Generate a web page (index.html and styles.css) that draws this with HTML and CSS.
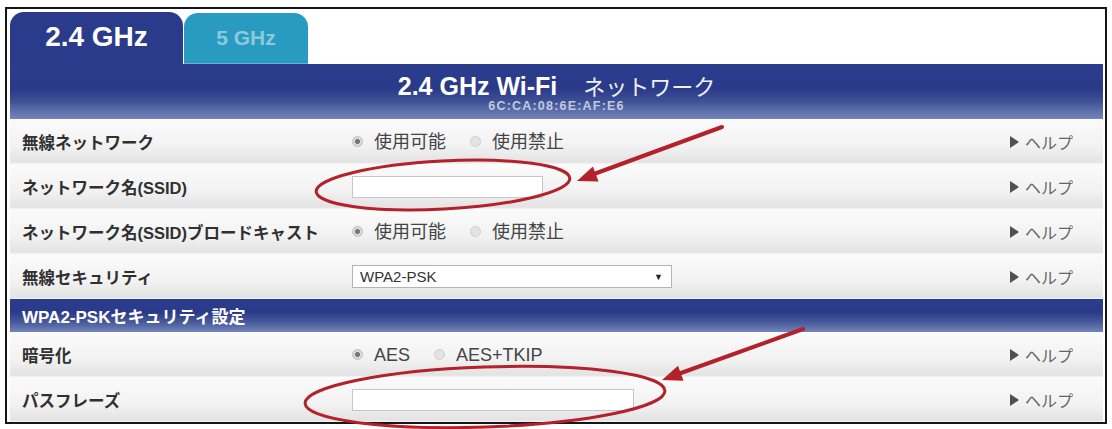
FILE: index.html
```html
<!DOCTYPE html>
<html lang="ja">
<head>
<meta charset="utf-8">
<title>2.4 GHz Wi-Fi ネットワーク</title>
<link rel="stylesheet" href="styles.css">
</head>
<body>
<div class="frame">
  <div class="tabs">
    <div class="tab tab-active">2.4 GHz</div>
    <div class="tab tab-inactive">5 GHz</div>
  </div>
  <div class="header">
    <div class="title"><span class="title-en">2.4 GHz Wi-Fi</span><span class="title-jp">ネットワーク</span></div>
    <div class="mac">6C:CA:08:6E:AF:E6</div>
  </div>

  <div class="row">
    <div class="label">無線ネットワーク</div>
    <div class="control">
      <span class="radio checked"></span><span class="opt">使用可能</span>
      <span class="radio"></span><span class="opt">使用禁止</span>
    </div>
    <div class="help"><span class="tri"></span>ヘルプ</div>
  </div>

  <div class="row">
    <div class="label">ネットワーク名(SSID)</div>
    <div class="control">
      <input class="text-input ssid" type="text" value="">
    </div>
    <div class="help"><span class="tri"></span>ヘルプ</div>
  </div>

  <div class="row">
    <div class="label">ネットワーク名(SSID)ブロードキャスト</div>
    <div class="control">
      <span class="radio checked"></span><span class="opt">使用可能</span>
      <span class="radio"></span><span class="opt">使用禁止</span>
    </div>
    <div class="help"><span class="tri"></span>ヘルプ</div>
  </div>

  <div class="row">
    <div class="label">無線セキュリティ</div>
    <div class="control">
      <div class="select"><span class="select-text">WPA2-PSK</span><span class="select-arrow">▼</span></div>
    </div>
    <div class="help"><span class="tri"></span>ヘルプ</div>
  </div>

  <div class="section">WPA2-PSKセキュリティ設定</div>

  <div class="row">
    <div class="label">暗号化</div>
    <div class="control">
      <span class="radio checked"></span><span class="opt">AES</span>
      <span class="radio"></span><span class="opt">AES+TKIP</span>
    </div>
    <div class="help"><span class="tri"></span>ヘルプ</div>
  </div>

  <div class="row">
    <div class="label">パスフレーズ</div>
    <div class="control">
      <input class="text-input pass" type="text" value="">
    </div>
    <div class="help"><span class="tri"></span>ヘルプ</div>
  </div>
</div>

<svg class="annot" width="1112" height="429" viewBox="0 0 1112 429" xmlns="http://www.w3.org/2000/svg">
  <g fill="none" stroke="#b3212a" stroke-width="3">
    <ellipse cx="443" cy="185" rx="127" ry="24" transform="rotate(-3 443 185)"/>
    <ellipse cx="485" cy="397" rx="180" ry="30" transform="rotate(-2 485 397)"/>
  </g>
  <g stroke="#b3212a" stroke-width="4" stroke-linecap="round">
    <line x1="722" y1="127" x2="594" y2="174"/>
    <line x1="803" y1="329" x2="681" y2="373"/>
  </g>
  <g fill="#b3212a">
    <polygon points="577,181 598.5,181.5 592.9,166.5"/>
    <polygon points="662,380 683.5,380.7 678,365.7"/>
  </g>
</svg>
</body>
</html>
```

FILE: styles.css
```css
html, body {
  margin: 0;
  padding: 0;
  background: #ffffff;
}

body {
  font-family: "Liberation Sans", "Noto Sans CJK JP", sans-serif;
  color: #333;
}

.frame {
  box-sizing: border-box;
  width: 1102px;
  margin: 7px 0 0 5px;
  border: 2px solid #161616;
  padding: 3px 2px 0 3px;
  background: #fff;
}

/* Tabs */
.tabs {
  display: flex;
  height: 52px;
  gap: 1px;
}

.tab {
  display: flex;
  align-items: center;
  justify-content: center;
  font-weight: bold;
  border-radius: 14px 14px 0 0;
}

.tab-active {
  width: 173px;
  background: #2b3b8c;
  color: #ffffff;
  font-size: 28px;
  padding-bottom: 2px;
  box-sizing: border-box;
}

.tab-inactive {
  width: 124px;
  margin-top: 1px;
  background: #2a9bc0;
  color: #8bcadd;
  font-size: 21px;
  border-bottom: 1px solid #5fb6d2;
  box-sizing: border-box;
}

/* Main header */
.header {
  height: 55px;
  box-sizing: border-box;
  padding-top: 7px;
  background: linear-gradient(to bottom, #2c3d8e 0%, #2a3a89 45%, #3e5196 68%, #6274ad 88%, #7385b8 100%);
  display: flex;
  flex-direction: column;
  align-items: center;
  color: #fff;
}

.title {
  display: flex;
  align-items: baseline;
  line-height: 28px;
  height: 28px;
}

.title-en {
  font-size: 25px;
  font-weight: bold;
}

.title-jp {
  font-family: "Noto Sans CJK JP", sans-serif;
  font-size: 22px;
  margin-left: 26px;
  color: #eef0f8;
}

.mac {
  font-size: 12.5px;
  font-weight: bold;
  letter-spacing: 1.2px;
  line-height: 14px;
  color: #c3c9df;
}

/* Rows */
.row {
  display: grid;
  grid-template-columns: 342px 1fr auto;
  align-items: center;
  height: 45px;
  box-sizing: border-box;
  padding-right: 30px;
  background: linear-gradient(to bottom, #fbfbfb 0%, #f2f2f2 60%, #e3e3e3 96%, #f6f6f6 100%);
}

.label {
  padding-left: 12px;
  font-size: 16.5px;
  font-weight: bold;
  color: #303030;
  white-space: nowrap;
}

.control {
  display: flex;
  align-items: center;
  font-size: 18px;
  color: #444;
}

.radio {
  width: 11px;
  height: 11px;
  box-sizing: border-box;
  border-radius: 50%;
  background: #e3e3e3;
  border: 1px solid #cfcfcf;
  margin-right: 11px;
}

.radio.checked {
  background: radial-gradient(circle, #777 0, #777 2.2px, #dadada 2.8px);
  border-color: #bdbdbd;
}

.opt {
  margin-right: 24px;
  line-height: 22px;
}

.text-input {
  box-sizing: border-box;
  height: 22px;
  border: 1px solid #c6c6c6;
  background: #fff;
  padding: 0;
  margin: 0;
  outline: none;
}

.ssid {
  width: 191px;
}

.pass {
  width: 282px;
}

.select {
  box-sizing: border-box;
  width: 320px;
  height: 23px;
  border: 1px solid #b4b4b4;
  background: #fff;
  display: flex;
  align-items: center;
  justify-content: space-between;
  padding: 0 8px 0 7px;
}

.select-text {
  font-size: 15px;
  color: #333;
}

.select-arrow {
  font-size: 9px;
  color: #222;
}

.help {
  display: flex;
  align-items: center;
  font-family: "Noto Sans CJK JP", sans-serif;
  font-size: 16px;
  color: #666;
}

.tri {
  width: 0;
  height: 0;
  border-left: 9px solid #505050;
  border-top: 6px solid transparent;
  border-bottom: 6px solid transparent;
  margin-right: 6px;
}

/* Section header */
.section {
  height: 33px;
  box-sizing: border-box;
  padding-left: 12px;
  display: flex;
  align-items: center;
  color: #fff;
  font-size: 17px;
  font-weight: bold;
  background: linear-gradient(to bottom, #2c3d8e 0%, #2a3a89 40%, #4a5c9c 72%, #7385b8 100%);
}

/* Annotation overlay */
.annot {
  position: absolute;
  left: 0;
  top: 0;
  pointer-events: none;
}
```
